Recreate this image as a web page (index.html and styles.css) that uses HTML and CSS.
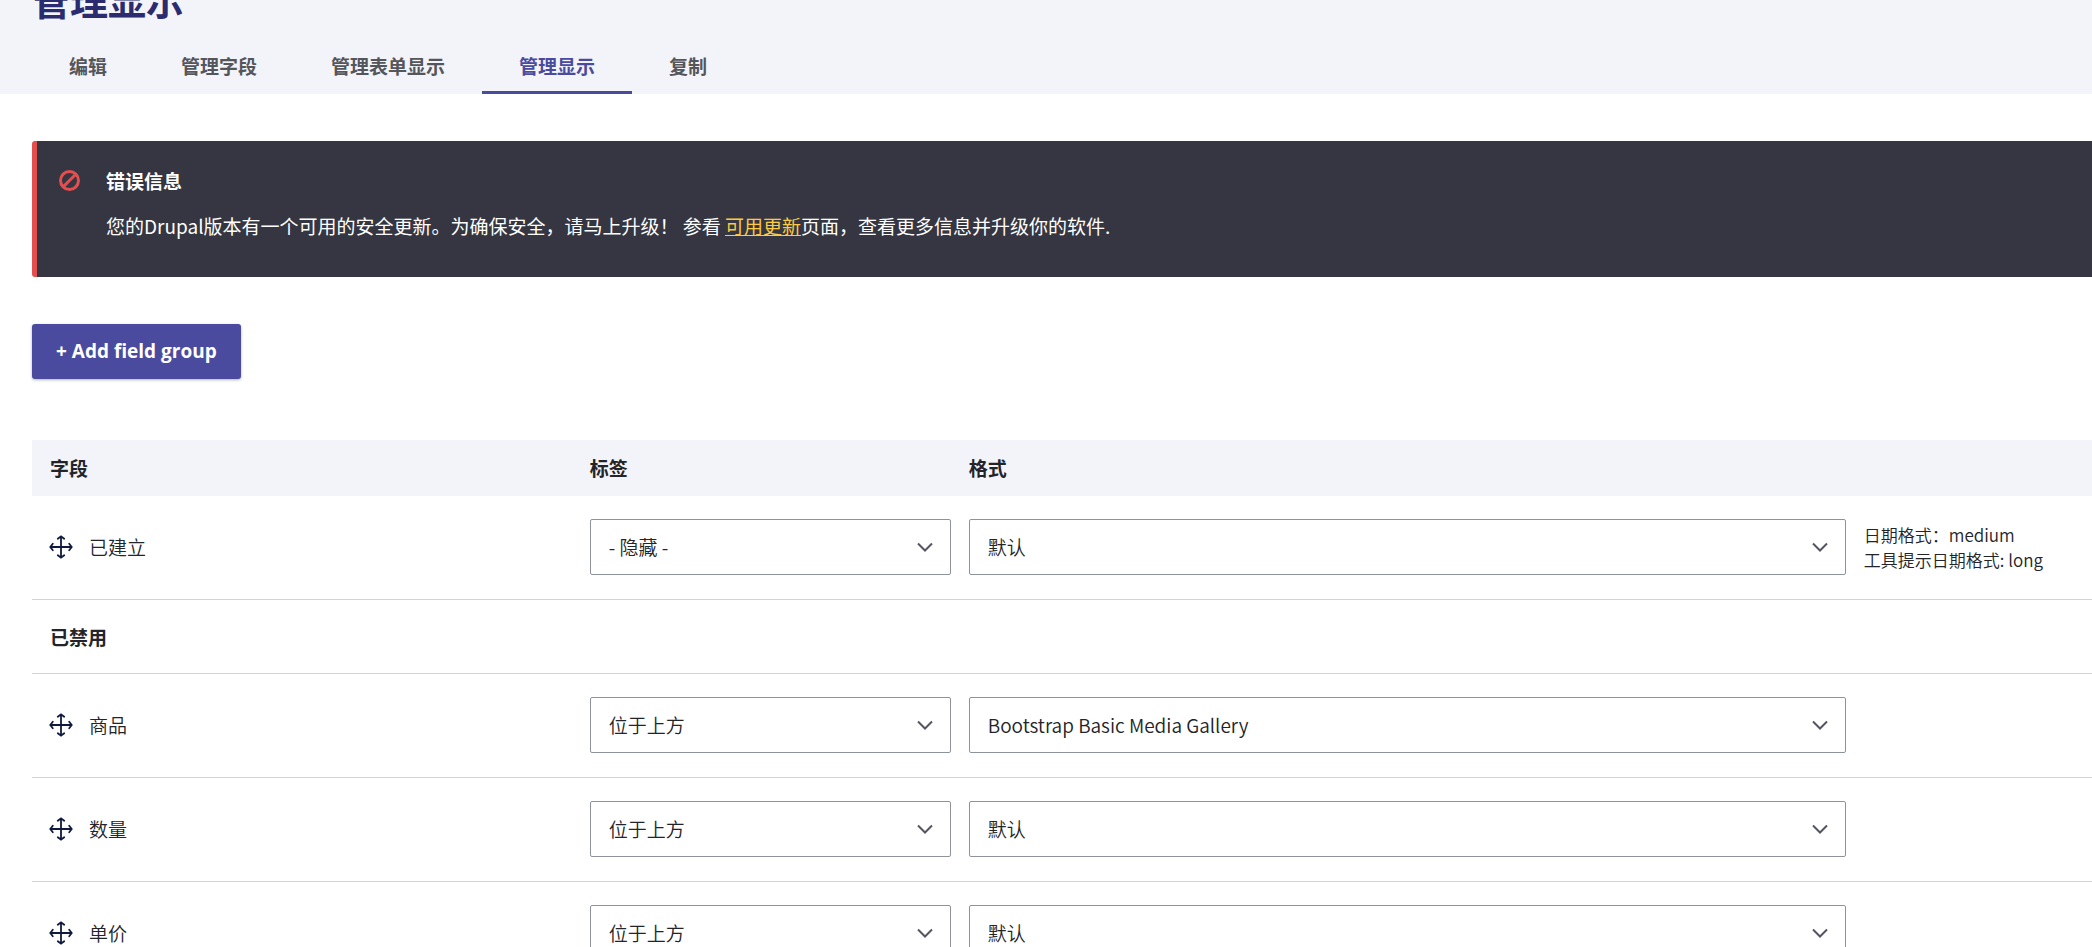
FILE: index.html
```
<!DOCTYPE html>
<html lang="zh-hans">

<head>
    <meta charset="utf-8">
    <title>管理显示</title>
    <link rel="stylesheet" href="styles.css">
</head>

<body>
    <!-- Shared drag handle icon -->
    <svg class="sprite" aria-hidden="true">
        <symbol id="move" viewBox="0 0 24 24">
            <path d="M12 1.500v21M1.500 12h21M8.800 3.800L12 1.300l3.200 2.500M8.800 20.200l3.200 2.500 3.200-2.500M3.800 8.800L1.300 12l2.500 3.200M20.200 8.800l2.500 3.200-2.500 3.200" />
        </symbol>
    </svg>

    <header class="page-header">
        <h1 class="page-title">管理显示</h1>
        <nav class="tabs">
            <a class="tab" href="#">编辑</a>
            <a class="tab" href="#">管理字段</a>
            <a class="tab" href="#">管理表单显示</a>
            <a class="tab is-active" href="#">管理显示</a>
            <a class="tab" href="#">复制</a>
        </nav>
    </header>

    <main class="content">
        <!-- Status message -->
        <div class="message" role="alert">
            <svg class="message-icon" viewBox="0 0 21 21" aria-hidden="true">
                <circle cx="10.5" cy="10.5" r="9" />
                <path d="M4.500 16.500l12-12" />
            </svg>
            <div>
                <h2 class="message-title">错误信息</h2>
                <p class="message-text">您的Drupal版本有一个可用的安全更新。为确保安全，请马上升级！ 参看 <a href="#">可用更新</a>页面，查看更多信息并升级你的软件.</p>
            </div>
        </div>

        <button class="button" type="button">+ Add field group</button>

        <!-- Field display settings -->
        <table class="fields">
            <colgroup>
                <col class="col-field">
                <col class="col-label">
                <col class="col-format">
                <col>
            </colgroup>
            <thead>
                <tr>
                    <th>字段</th>
                    <th>标签</th>
                    <th>格式</th>
                    <th></th>
                </tr>
            </thead>
            <tbody>
                <tr>
                    <td>
                        <div class="field-name"><svg class="handle"><use href="#move" /></svg>已建立</div>
                    </td>
                    <td><select class="select" aria-label="已建立 标签"><option>- 隐藏 -</option></select></td>
                    <td><select class="select" aria-label="已建立 格式"><option>默认</option></select></td>
                    <td class="summary">日期格式：medium<br>工具提示日期格式: long</td>
                </tr>
                <tr class="region">
                    <td colspan="4">已禁用</td>
                </tr>
                <tr>
                    <td>
                        <div class="field-name"><svg class="handle"><use href="#move" /></svg>商品</div>
                    </td>
                    <td><select class="select" aria-label="商品 标签"><option>位于上方</option></select></td>
                    <td><select class="select" aria-label="商品 格式"><option>Bootstrap Basic Media Gallery</option></select></td>
                    <td></td>
                </tr>
                <tr>
                    <td>
                        <div class="field-name"><svg class="handle"><use href="#move" /></svg>数量</div>
                    </td>
                    <td><select class="select" aria-label="数量 标签"><option>位于上方</option></select></td>
                    <td><select class="select" aria-label="数量 格式"><option>默认</option></select></td>
                    <td></td>
                </tr>
                <tr>
                    <td>
                        <div class="field-name"><svg class="handle"><use href="#move" /></svg>单价</div>
                    </td>
                    <td><select class="select" aria-label="单价 标签"><option>位于上方</option></select></td>
                    <td><select class="select" aria-label="单价 格式"><option>默认</option></select></td>
                    <td></td>
                </tr>
            </tbody>
        </table>
    </main>
</body>

</html>
```
FILE: styles.css
```
* {
    box-sizing: border-box;
}

html {
    overflow: hidden;
}

body {
    margin: 0;
    font-family: "Noto Sans CJK SC", sans-serif;
    font-size: 19px;
    font-weight: 350;
    line-height: 28px;
    color: #232429;
    background-color: #fff;
}

.sprite {
    display: none;
}

.page-header {
    display: flow-root;
    padding: 0 32px;
    background-color: #f3f4f9;
}

.page-title {
    margin: -25px 0 15px;
    font-size: 38px;
    line-height: 48px;
    color: #2b2c6f;
}

.tabs {
    display: flex;
}

.tab {
    padding: 14px 37px;
    font-weight: bold;
    color: #55565b;
    text-decoration: none;
}

.tab.is-active {
    color: #4a4b9e;
    box-shadow: inset 0 -3px #4a4b9e;
}

.content {
    padding: 47px 0 0 32px;
}

.message {
    display: flex;
    gap: 26px;
    margin-bottom: 47px;
    padding: 26px 22px 37px;
    border-left: 5px solid #e34f4f;
    border-radius: 3px 0 0 3px;
    color: #fff;
    background-color: #353641;
}

.message-icon {
    flex: none;
    width: 21px;
    height: 21px;
    margin-top: 3px;
    fill: none;
    stroke: #e34f4f;
    stroke-width: 3;
}

.message-title {
    margin: 0 0 17px;
    font-size: 19px;
    line-height: 28px;
}

.message-text {
    margin: 0;
    font-weight: 400;
}

.message-text a {
    color: #fdca40;
}

.button {
    display: block;
    height: 55px;
    margin-bottom: 61px;
    padding: 0 24px 1px;
    border: 0;
    border-radius: 3px;
    font: bold 19px "Open Sans", sans-serif;
    color: #fff;
    background-color: #4a4b9e;
    box-shadow: 0 1px 3px rgba(0, 0, 0, 0.3);
}

.fields {
    width: 100%;
    table-layout: fixed;
    border-collapse: separate;
    border-spacing: 0;
}

.col-field {
    width: 26.2%;
}

.col-label {
    width: 18.4%;
}

.col-format {
    width: 43.45%;
}

.fields th {
    height: 56px;
    padding: 0 0 0 18px;
    text-align: left;
    background-color: #f3f4f9;
}

.fields td {
    padding: 23px 0 24px 18px;
    border-bottom: 1px solid #d3d4d9;
}

.fields .region td {
    padding: 23px 0 22px 18px;
    font-weight: bold;
}

.fields .field-name {
    display: flex;
    align-items: center;
    gap: 16px;
    margin-left: -1px;
}

.handle {
    width: 24px;
    height: 24px;
    fill: none;
    stroke: #0f1a3c;
    stroke-width: 1.8;
    stroke-linecap: round;
}

.select {
    display: block;
    width: 100%;
    height: 56px;
    padding: 0 48px 0 18px;
    border: 1px solid #8e929c;
    border-radius: 2px;
    appearance: none;
    font: inherit;
    color: #232429;
    background: #fff url("data:image/svg+xml,%3Csvg xmlns='http://www.w3.org/2000/svg' width='16' height='11' fill='none' stroke='%23545560' stroke-width='2'%3E%3Cpath d='M1 1.500l7 7 7-7'/%3E%3C/svg%3E") no-repeat right 17px center;
}

.fields .summary {
    padding-top: 0;
    padding-bottom: 2px;
    font-size: 17px;
    line-height: 25px;
}
```
